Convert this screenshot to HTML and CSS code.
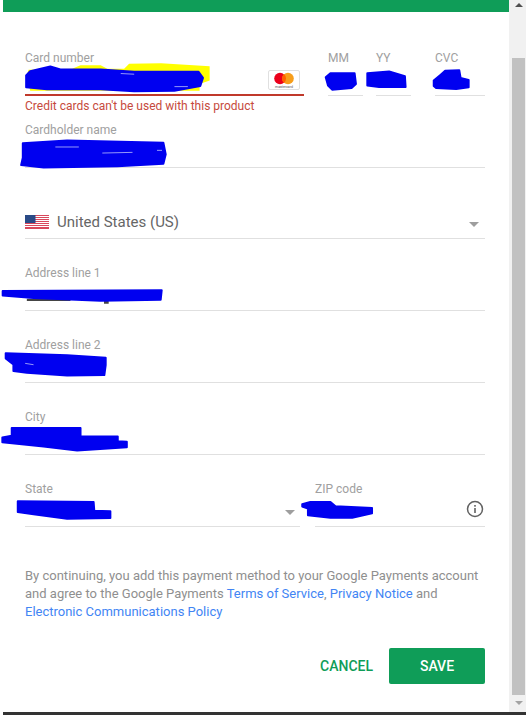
FILE: index.html
```html
<!DOCTYPE html>
<html lang="en">
<head>
  <meta charset="UTF-8">
  <title>Add payment method</title>
  <link rel="stylesheet" href="styles.css">
</head>
<body>
  <div class="window">
    <div class="dialog">
      <div class="top-bar"></div>
      <form class="form">
        <div class="card-row">
          <div class="field field-card">
            <label>Card number</label>
            <div class="value value-end">
              <span class="card-logo">
                <svg width="30" height="18" viewBox="0 0 30 18">
                  <circle cx="11" cy="7.5" r="5.8" fill="#eb001b"/>
                  <circle cx="19" cy="7.5" r="5.8" fill="#f79e1b"/>
                  <path d="M15 3.1a5.8 5.8 0 0 1 0 8.8a5.8 5.8 0 0 1 0-8.8z" fill="#ff5f00"/>
                  <text x="15" y="17" text-anchor="middle" class="card-logo-text">mastercard</text>
                </svg>
              </span>
            </div>
          </div>
          <div class="field field-mm">
            <label>MM</label>
            <div class="value"></div>
          </div>
          <div class="field field-yy">
            <label>YY</label>
            <div class="value"></div>
          </div>
          <div class="field field-cvc">
            <label>CVC</label>
            <div class="value"></div>
          </div>
        </div>
        <p class="error">Credit cards can't be used with this product</p>

        <div class="field field-name">
          <label>Cardholder name</label>
          <div class="value"></div>
        </div>

        <div class="country">
          <svg class="flag" width="24" height="14" viewBox="0 0 24 14">
            <rect width="24" height="14" fill="#fff"/>
            <path d="M0 .5h24M0 2.5h24M0 4.5h24M0 6.5h24M0 8.5h24M0 10.5h24M0 12.5h24M0 13.5h24" stroke="#d9485c" stroke-width="1"/>
            <rect width="10.5" height="8" fill="#2a4a86"/>
          </svg>
          <span class="country-name">United States (US)</span>
          <span class="arrow"></span>
        </div>

        <div class="field">
          <label>Address line 1</label>
          <div class="value"></div>
        </div>
        <div class="field">
          <label>Address line 2</label>
          <div class="value"></div>
        </div>
        <div class="field">
          <label>City</label>
          <div class="value"></div>
        </div>

        <div class="state-row">
          <div class="field field-state">
            <label>State</label>
            <div class="value value-arrow"><span class="arrow"></span></div>
          </div>
          <div class="field field-zip">
            <label>ZIP code</label>
            <div class="value value-info">
              <svg width="18" height="18" viewBox="0 0 18 18">
                <circle cx="9" cy="9" r="7.5" fill="none" stroke="#616161" stroke-width="1.5"/>
                <rect x="8.2" y="8" width="1.6" height="5" fill="#616161"/>
                <rect x="8.2" y="5" width="1.6" height="1.7" fill="#616161"/>
              </svg>
            </div>
          </div>
        </div>

        <p class="terms">By continuing, you add this payment method to your Google Payments account<br>and agree to the Google Payments <a href="#">Terms of Service</a>, <a href="#">Privacy Notice</a> and<br><a href="#">Electronic Communications Policy</a></p>

        <div class="actions">
          <button type="button" class="btn-cancel">CANCEL</button>
          <button type="button" class="btn-save">SAVE</button>
        </div>
      </form>
    </div>
    <div class="scrollbar">
      <span class="sb-up"></span>
      <div class="sb-thumb"></div>
      <span class="sb-down"></span>
    </div>
  </div>
  <div class="bottom-bar"></div>

  <!-- marker scribbles drawn over the screenshot -->
  <svg class="scribbles" viewBox="0 0 1568 2131">
    <path fill="#ffff00" d="M85 208L215 205L240 194L300 194L320 205L370 205L385 190L480 188L625 197L625 240L595 250L595 270L90 270L80 225Z"/>
    <path fill="#444" d="M80 890h130v7h-130zM310 892h14v13h-14z"/>
    <g class="scribble">
      <path d="M78 225L90 212L150 198L180 207L300 207L400 214L592 214L605 232L597 256L520 270L400 272L300 266L140 266L78 260Z"/>
      <path d="M971 230L985 218L1057 218L1061 250L1048 262L990 267L978 255Z"/>
      <path d="M1095 218L1160 213L1207 227L1209 259L1130 259L1095 255Z"/>
      <path d="M1293 240L1312 224L1327 211L1369 209L1373 232L1397 238L1397 260L1360 265L1300 262L1293 256Z"/>
      <path d="M68 427L200 419L487 425L494 460L487 488L350 495L130 499L63 492L68 470Z"/>
      <path d="M8 867L482 865L479 893L300 896L100 888L8 881Z"/>
      <path d="M17 1053L200 1059L315 1066L315 1088L311 1118L200 1119L80 1111L40 1106L40 1086L17 1068Z"/>
      <path d="M35 1276L240 1276L240 1301L351 1301L351 1315L378 1317L378 1333L230 1343L130 1331L7 1318L7 1304L35 1299Z"/>
      <path d="M53 1494L279 1496L281 1522L329 1524L329 1544L200 1546L100 1533L53 1526Z"/>
      <path d="M901 1503L925 1496L985 1496L1000 1509L1109 1514L1109 1530L1050 1543L985 1543L918 1536L918 1516L901 1510Z"/>
    </g>
    <path class="scribble-gap" d="M360 219L400 221M520 258L560 258M165 438L235 438M305 456L395 454M468 448L483 448M75 1083L100 1087"/>
  </svg>
</body>
</html>
```

FILE: styles.css
```css
* {
  box-sizing: border-box;
}
body {
  margin: 0;
  width: 526px;
  height: 715px;
  overflow: hidden;
  position: relative;
  background: #fff;
  font-family: Roboto, "Liberation Sans", sans-serif;
  display: flex;
  flex-direction: column;
}
.window {
  flex: 1;
  display: flex;
  min-height: 0;
  padding-left: 3px;
}
.dialog {
  flex: 1;
}
.top-bar {
  height: 12px;
  background: #0f9d58;
}
.form {
  padding: 39px 24px 0 22px;
}
.field {
  margin-top: 27px;
}
.field label {
  display: block;
  height: 14px;
  font-size: 12px;
  line-height: 14px;
  color: #a0a0a0;
}
.value {
  height: 30px;
  border-bottom: 1px solid #e0e0e0;
  box-sizing: content-box;
}
.card-row {
  display: flex;
}
.card-row .field {
  margin-top: 0;
}
.field-card {
  width: 279px;
}
.field-card .value {
  height: 31px;
  border-bottom: 2px solid #c0392b;
  box-sizing: border-box;
}
.field-mm {
  width: 35px;
  margin-left: 24px;
}
.field-yy {
  width: 35px;
  margin-left: 13px;
}
.field-cvc {
  width: 50px;
  margin-left: 24px;
}
.value-end {
  display: flex;
  justify-content: flex-end;
  align-items: flex-end;
  padding: 0 4px 4px 0;
}
.card-logo {
  display: flex;
  align-items: center;
  justify-content: center;
  width: 32px;
  height: 20px;
  border: 1px solid #e0e0e0;
  border-radius: 2px;
}
.card-logo-text {
  font-size: 3.5px;
  fill: #555;
}
.error {
  margin: 3px 0 0;
  font-size: 12px;
  line-height: 14px;
  color: #c64a3c;
}
.field-name {
  margin-top: 10px;
}
.country {
  margin-top: 40px;
  height: 31px;
  display: flex;
  align-items: center;
  padding-bottom: 2px;
  border-bottom: 1px solid #e0e0e0;
}
.flag {
  margin-right: 8px;
}
.country-name {
  flex: 1;
  font-size: 15px;
  color: #666;
}
.arrow {
  width: 0;
  height: 0;
  border-left: 5px solid transparent;
  border-right: 5px solid transparent;
  border-top: 5px solid #9e9e9e;
  margin: 4px 6px 0 0;
}
.state-row {
  display: flex;
  gap: 15px;
}
.field-state {
  width: 275px;
}
.field-zip {
  width: 170px;
}
.value-arrow {
  display: flex;
  justify-content: flex-end;
  align-items: center;
}
.value-arrow .arrow {
  margin: 3px 5px 0 0;
}
.value-info {
  display: flex;
  justify-content: flex-end;
  align-items: center;
  padding-right: 1px;
}
.value-info svg {
  margin-bottom: 4px;
}
.terms {
  margin: 40px 0 0;
  font-size: 13px;
  line-height: 18px;
  color: #8f8f8f;
}
.terms a {
  color: #4285f4;
  text-decoration: none;
}
.actions {
  margin-top: 27px;
  display: flex;
  justify-content: flex-end;
  align-items: center;
  gap: 16px;
}
.actions button {
  border: none;
  background: none;
  padding: 0;
  font-family: inherit;
  font-size: 14px;
  font-weight: 500;
  cursor: pointer;
}
.btn-cancel {
  color: #0f9d58;
}
.actions .btn-save {
  width: 96px;
  height: 36px;
  background: #0f9d58;
  border-radius: 2px;
  color: #fff;
}
.scrollbar {
  width: 17px;
  background: #f1f1f1;
  display: flex;
  flex-direction: column;
  align-items: center;
  padding-top: 3px;
}
.sb-up {
  width: 0;
  height: 0;
  border-left: 4px solid transparent;
  border-right: 4px solid transparent;
  border-bottom: 4px solid #505050;
  margin-left: 2px;
}
.sb-thumb {
  width: 13px;
  height: 637px;
  margin: 51px 0 0 2px;
  background: #c1c1c1;
}
.sb-down {
  width: 0;
  height: 0;
  border-left: 4px solid transparent;
  border-right: 4px solid transparent;
  border-top: 4px solid #a3a3a3;
  margin: 6px 0 0 2px;
}
.bottom-bar {
  height: 3px;
  margin-left: 3px;
  background: #333;
}
.scribbles {
  position: absolute;
  left: 0;
  top: 0;
  width: 526px;
  height: 715px;
  pointer-events: none;
}
.scribble path {
  fill: #0000f0;
  stroke: #0000f0;
  stroke-width: 6;
  stroke-linejoin: round;
}
.scribble-gap {
  fill: none;
  stroke: #dfe4ff;
  stroke-width: 2;
}
```
